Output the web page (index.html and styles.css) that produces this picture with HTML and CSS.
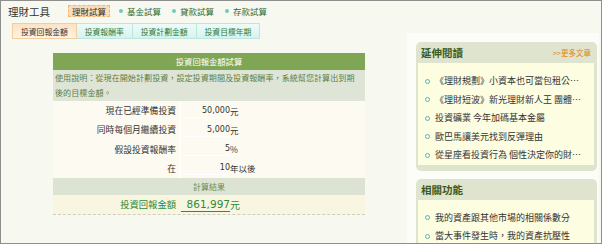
FILE: index.html
```html
<!DOCTYPE html>
<html lang="zh-Hant">
<head>
    <meta charset="UTF-8">
    <title>理財工具</title>
    <link rel="stylesheet" href="styles.css">
</head>
<body>
    <div class="frame">
        <!-- 上方導覽 -->
        <div class="topbar">
            <span class="brand">理財工具</span>
            <span class="topnav-current">理財試算</span>
            <a class="topnav-link" href="#">基金試算</a>
            <a class="topnav-link" href="#">貸款試算</a>
            <a class="topnav-link" href="#">存款試算</a>
        </div>

        <div class="layout">
            <div class="content">
                <div class="subtabs">
                    <a class="subtab active" href="#">投資回報金額</a>
                    <a class="subtab" href="#">投資報酬率</a>
                    <a class="subtab" href="#">投資計劃金額</a>
                    <a class="subtab" href="#">投資目標年期</a>
                </div>

                <div class="panel">
                    <div class="panel-title">投資回報金額試算</div>
                    <div class="panel-note">使用說明：從現在開始計劃投資，設定投資期間及投資報酬率，系統幫您計算出到期<br>後的目標金額。</div>

                    <div class="form-row">
                        <div class="form-label">現在已經準備投資</div>
                        <div class="form-field"><span class="field-input">50,000</span><span class="unit">元</span></div>
                    </div>
                    <div class="form-row">
                        <div class="form-label">同時每個月繼續投資</div>
                        <div class="form-field"><span class="field-input">5,000</span><span class="unit">元</span></div>
                    </div>
                    <div class="form-row">
                        <div class="form-label">假設投資報酬率</div>
                        <div class="form-field"><span class="field-input">5</span><span class="unit">%</span></div>
                    </div>
                    <div class="form-row">
                        <div class="form-label">在</div>
                        <div class="form-field"><span class="field-input">10</span><span class="unit">年以後</span></div>
                    </div>

                    <div class="result-head">計算結果</div>
                    <div class="result-row">
                        <div class="result-label">投資回報金額</div>
                        <div class="result-field"><span class="result-value">861,997</span><span class="result-unit">元</span></div>
                    </div>
                </div>
            </div>

            <div class="sidebar">
                <div class="side-box">
                    <div class="side-head">
                        <span class="side-title">延伸閱讀</span>
                        <a class="side-more" href="#">&gt;&gt;更多文章</a>
                    </div>
                    <ul class="side-list">
                        <li>《理財規劃》小資本也可當包租公…</li>
                        <li>《理財短波》新光理財新人王 團體…</li>
                        <li>投資礦業 今年加碼基本金屬</li>
                        <li>歐巴馬讓美元找到反彈理由</li>
                        <li>從星座看投資行為 個性決定你的財…</li>
                    </ul>
                </div>
                <div class="side-box">
                    <div class="side-head">
                        <span class="side-title">相關功能</span>
                    </div>
                    <ul class="side-list">
                        <li>我的資產跟其他市場的相關係數分</li>
                        <li>當大事件發生時，我的資產抗壓性</li>
                    </ul>
                </div>
            </div>
        </div>
    </div>
</body>
</html>
```

FILE: styles.css
```css
body {
    margin: 0;
    font-family: "Noto Sans CJK TC", "Noto Sans", sans-serif;
    color: #333;
}

a {
    text-decoration: none;
}

.frame {
    width: 602px;
    height: 244px;
    box-sizing: border-box;
    border: 1px solid #8e8e8e;
    background-color: #f7f9f1;
    overflow: hidden;
}

/* 上方導覽 */
.topbar {
    height: 20px;
    display: flex;
    align-items: center;
    padding-left: 7px;
}

.brand {
    font-size: 10.5px;
    color: #333;
    margin-right: 18px;
}

.topnav-current {
    font-size: 8.5px;
    line-height: 10px;
    padding: 0 3px;
    background-color: #fbdcb8;
    border: 1px dashed #f2b77a;
    color: #333;
    margin-right: 9px;
}

.topnav-link {
    font-size: 8.5px;
    color: #2f6b2f;
    display: flex;
    align-items: center;
    margin-right: 11px;
}

.topnav-link::before {
    content: "";
    width: 4px;
    height: 4px;
    border-radius: 50%;
    background-color: #6fcac0;
    margin-right: 4px;
}

.layout {
    display: flex;
}

.content {
    width: 406px;
}

/* 子分頁 */
.subtabs {
    display: flex;
    margin: 2px 0 0 11px;
}

.subtab {
    height: 16px;
    line-height: 15px;
    box-sizing: border-box;
    font-size: 7.8px;
    color: #2e7a35;
    padding: 0 8px;
    border: 1px solid #bde6df;
    border-left: none;
    background: linear-gradient(#eefbf8, #d6f3ee);
}

.subtab.active {
    color: #333;
    border: 1px solid #f1cd9f;
    background: linear-gradient(#fde2c2, #fff3e3);
    padding: 0 8px;
}

/* 試算面板 */
.panel {
    margin: 14px 0 0 52px;
    width: 312px;
    background-color: #fdfbf1;
}

.panel-title {
    height: 17px;
    line-height: 17px;
    background-color: #7fa655;
    color: #fff;
    font-size: 8.3px;
    text-align: center;
}

.panel-note {
    height: 31px;
    box-sizing: border-box;
    background-color: #dfe5d6;
    color: #5e7f45;
    font-size: 8.1px;
    line-height: 14.5px;
    padding: 1px 0 0 2px;
    white-space: nowrap;
}

.form-row {
    display: flex;
    height: 19.25px;
    align-items: stretch;
}

.form-label {
    width: 126px;
    box-sizing: border-box;
    padding-right: 3px;
    text-align: right;
    font-size: 8.8px;
    line-height: 19px;
}

.form-field {
    flex: 1;
    display: flex;
    align-items: center;
    border-left: 2px solid #fffefa;
}

.field-input {
    width: 49px;
    text-align: right;
    font-family: "DejaVu Sans", sans-serif;
    font-size: 8px;
    line-height: 13px;
    border-bottom: 1px solid #ffffff;
}

.unit {
    font-size: 8.5px;
}

.result-head {
    height: 17px;
    line-height: 17px;
    background-color: #dce3d3;
    color: #6b8b52;
    font-size: 8px;
    text-align: center;
}

.result-row {
    display: flex;
    height: 20px;
    box-sizing: border-box;
    background-color: #f8f5e0;
    border-bottom: 1px dashed #cfcfbf;
}

.result-label {
    width: 126px;
    box-sizing: border-box;
    padding-right: 3px;
    text-align: right;
    color: #2f8a3a;
    font-size: 9.3px;
    line-height: 19px;
}

.result-field {
    display: flex;
    align-items: center;
    padding-left: 2px;
    color: #2f8a3a;
}

.result-value {
    width: 49px;
    text-align: right;
    font-family: "DejaVu Sans", sans-serif;
    font-size: 10.5px;
    line-height: 14px;
    border-bottom: 1px solid #6a6a5a;
}

.result-unit {
    font-size: 10px;
}

/* 側欄 */
.sidebar {
    width: 192px;
    margin-top: 12px;
    padding: 9px 2px 0 9px;
    box-sizing: border-box;
    background-color: #fcfdf9;
    height: 300px;
}

.side-box {
    background-color: #dfe4cf;
    border-radius: 5px;
    padding: 0 3px 6px 2px;
    margin-bottom: 8px;
}

.side-head {
    height: 21px;
    display: flex;
    align-items: center;
    justify-content: space-between;
    padding: 0 3px 0 3px;
}

.side-title {
    font-size: 10.5px;
    font-weight: bold;
    color: #3b5a1c;
}

.side-more {
    font-size: 7.5px;
    color: #e3840c;
}

.side-list {
    list-style: none;
    margin: 0;
    padding: 9px 0 0 0;
    background-color: #fdfde2;
}

.side-list li {
    height: 18.5px;
    line-height: 18.5px;
    font-size: 9px;
    display: flex;
    align-items: center;
    white-space: nowrap;
    overflow: hidden;
}

.side-list li::before {
    content: "";
    width: 3px;
    height: 3px;
    border: 1px solid #5cb3ac;
    border-radius: 50%;
    margin: 0 5px 0 7px;
    flex-shrink: 0;
}
```
